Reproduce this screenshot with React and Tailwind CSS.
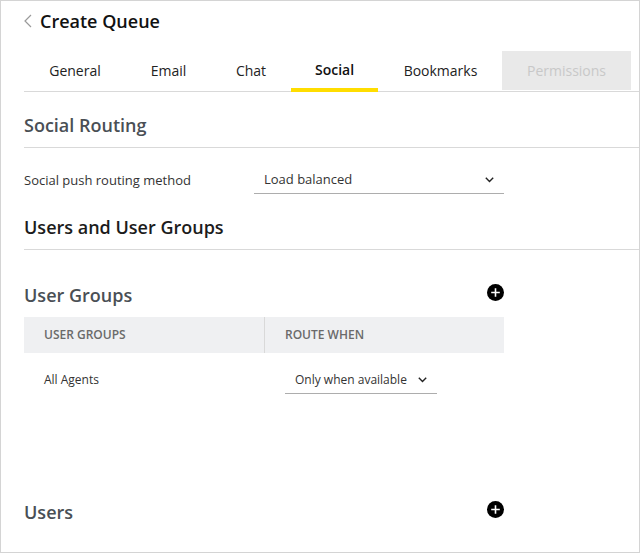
import React from "react";

function Chevron({ className }) {
  return (
    <svg className={className} width="9" height="6" viewBox="0 0 9 6" fill="none" stroke="#222" strokeWidth="1.4">
      <path d="M0.8 0.8 L4.5 4.5 L8.2 0.8" />
    </svg>
  );
}

function Plus() {
  return (
    <svg width="17" height="17" viewBox="0 0 17 17">
      <circle cx="8.5" cy="8.5" r="8.5" fill="#000" />
      <path d="M8.5 4.2 V12.8 M4.2 8.5 H12.8" stroke="#fff" strokeWidth="1.6" />
    </svg>
  );
}

const tabs = [
  ["General", "w-[100px] pl-[2px]"],
  ["Email", "w-[83px] ml-[3px]"],
  ["Chat", "w-[78px] ml-[2px]"],
];

export default function App() {
  return (
    <div className="w-[640px] h-[553px] overflow-hidden border border-[#d4d4d4] bg-white text-[#2b2b2b] font-['Open_Sans',sans-serif] text-[13px]">
      <div className="flex items-center h-[39px] pl-[23px] pt-[1px]">
        <svg width="8" height="14" viewBox="0 0 8 14" fill="none" stroke="#9a9a9a" strokeWidth="1.2">
          <path d="M7 1 L1 7 L7 13" />
        </svg>
        <h1 className="ml-[8px] text-[18px] font-semibold text-[#111] leading-none">Create Queue</h1>
      </div>

      <div className="ml-[23px] flex h-[52px] items-end border-b border-[#d9d9d9]">
        {tabs.map(([t, w]) => (
          <div key={t} className={`${w} h-[41px] flex items-center justify-center text-[14px] text-[#222]`}>{t}</div>
        ))}
        <div className="ml-px w-[87px] h-[41px] flex items-center justify-center border-b-4 border-[#ffdd00] text-[14px] font-semibold text-[#111] pb-[1px] -mb-px">Social</div>
        <div className="ml-[2px] w-[121px] h-[41px] flex items-center justify-center text-[14px] text-[#222]">Bookmarks</div>
        <div className="ml-px w-[129px] h-[39px] mb-[1px] flex items-center justify-center bg-[#e9e9e9] text-[14px] text-[#c8c8c8]">Permissions</div>
      </div>

      <div className="ml-[23px] h-[56px] pt-[10px] flex items-center border-b border-[#d9d9d9]">
        <h2 className="text-[18px] font-semibold text-[#4a4f55] leading-none">Social Routing</h2>
      </div>

      <div className="ml-[23px] h-[46px] flex items-end">
        <div className="w-[230px] pb-[4px] text-[13px] text-[#333]">Social push routing method</div>
        <div className="w-[250px] h-[27px] pl-[10px] pr-[10px] flex items-center justify-between border-b border-[#adadad] text-[13px] text-[#333]">
          <span>Load balanced</span>
          <Chevron />
        </div>
      </div>

      <div className="ml-[23px] h-[56px] pt-[10px] flex items-center border-b border-[#d9d9d9]">
        <h2 className="text-[18px] font-semibold text-[#1c1c1c] leading-none">Users and User Groups</h2>
      </div>

      <div className="ml-[23px] w-[480px] h-[67px] flex items-end justify-between">
        <h2 className="text-[18px] font-semibold text-[#4a4f55] leading-none pb-[13px]">User Groups</h2>
        <div className="pb-[16px]"><Plus /></div>
      </div>

      <div className="ml-[23px] w-[480px] h-[36px] flex items-center bg-[#eff0f2] text-[12px] font-semibold text-[#6a6a6a]">
        <div className="w-[241px] h-full flex items-center pl-[20px] border-r border-[#d9d9d9]">USER GROUPS</div>
        <div className="pl-[20px]">ROUTE WHEN</div>
      </div>

      <div className="ml-[23px] w-[480px] h-[41px] flex items-end">
        <div className="w-[261px] pl-[20px] pb-[5px] text-[12px] text-[#333]">All Agents</div>
        <div className="w-[152px] h-[27px] pl-[10px] pr-[10px] flex items-center justify-between border-b border-[#adadad] text-[12px] text-[#333]">
          <span>Only when available</span>
          <Chevron />
        </div>
      </div>

      <div className="ml-[23px] w-[480px] mt-[109px] flex items-center justify-between">
        <h2 className="text-[18px] font-semibold text-[#4a4f55] leading-none">Users</h2>
        <div className="-mt-[6px]"><Plus /></div>
      </div>
    </div>
  );
}
